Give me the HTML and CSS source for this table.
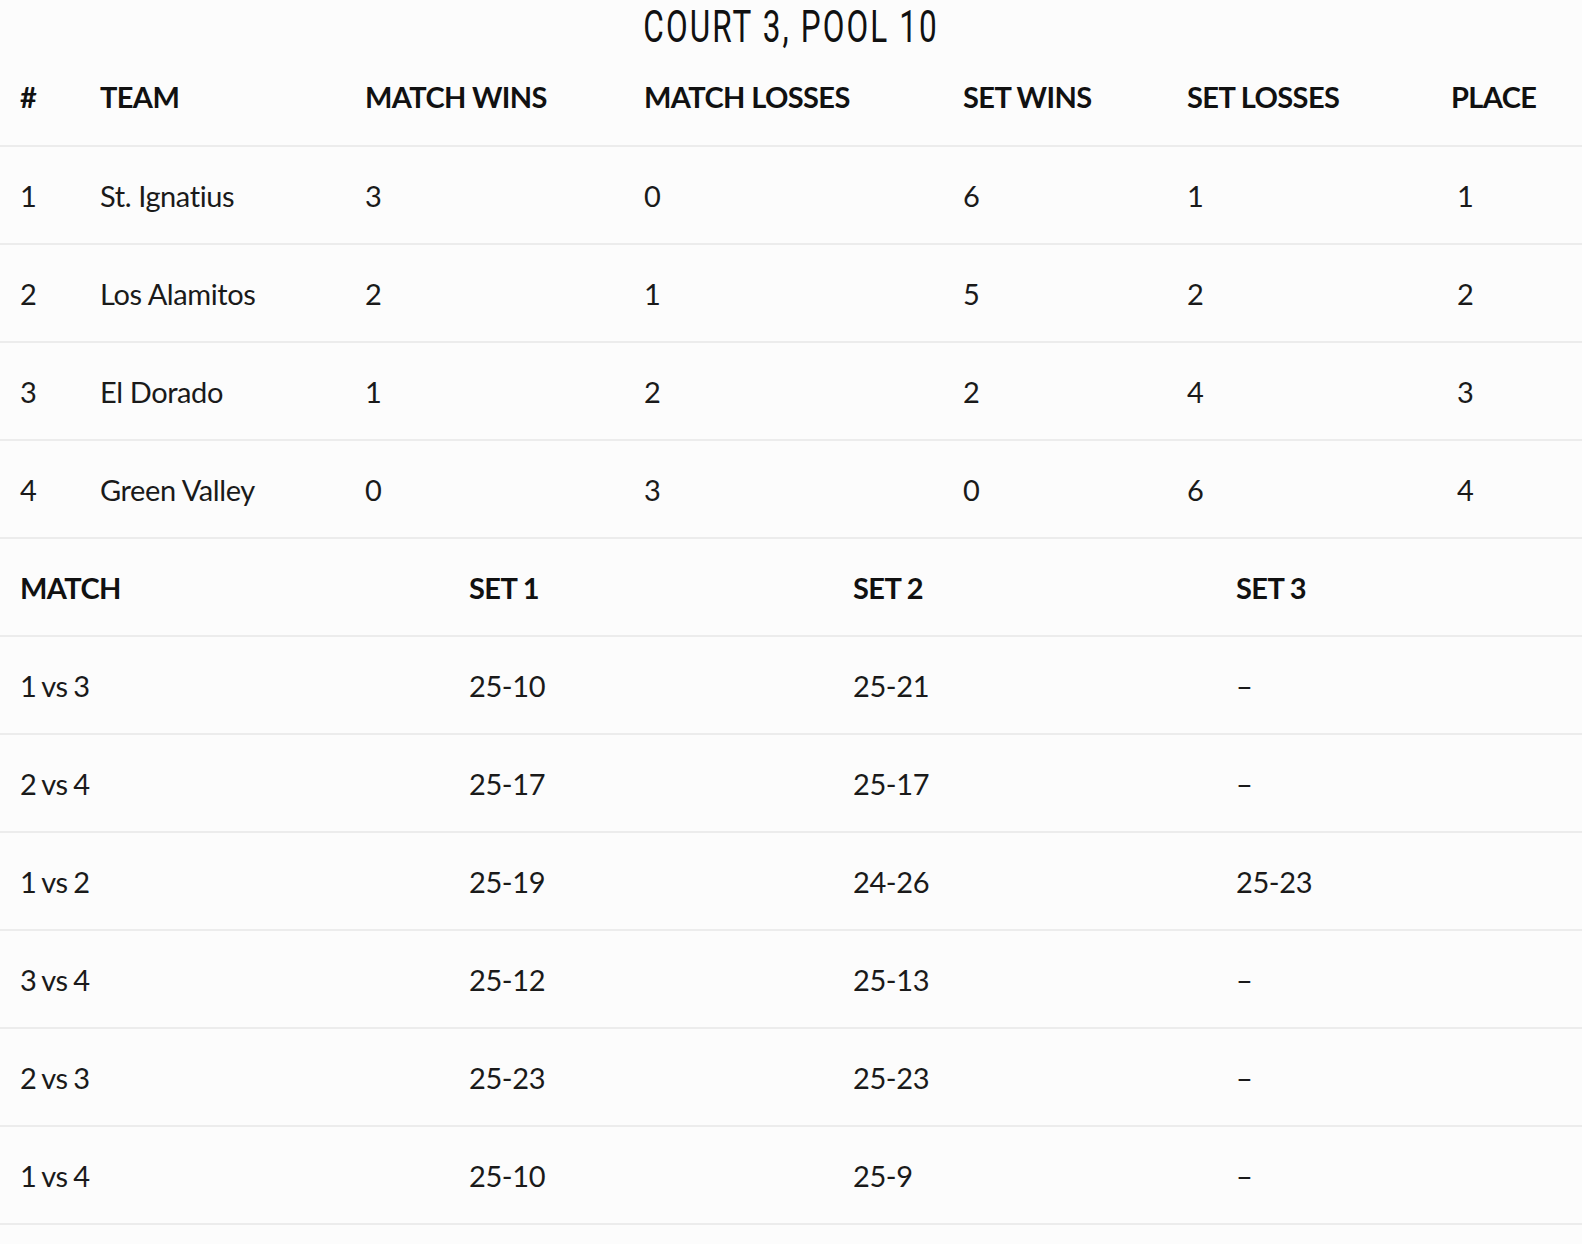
FILE: index.html
```html
<!DOCTYPE html>
<html lang="en">
<head>
<meta charset="utf-8">
<title>Court 3, Pool 10</title>
<link rel="stylesheet" href="styles.css">
</head>
<body>
<div class="title-wrap"><h1 class="title">COURT 3, POOL 10</h1></div>
<table class="grid standings">
  <colgroup>
    <col class="c-num"><col class="c-team"><col class="c-mw"><col class="c-ml"><col class="c-sw"><col class="c-sl"><col class="c-pl">
  </colgroup>
  <thead>
    <tr><th>#</th><th>TEAM</th><th>MATCH WINS</th><th>MATCH LOSSES</th><th>SET WINS</th><th>SET LOSSES</th><th>PLACE</th></tr>
  </thead>
  <tbody>
    <tr><td>1</td><td>St. Ignatius</td><td>3</td><td>0</td><td>6</td><td>1</td><td class="place">1</td></tr>
    <tr><td>2</td><td>Los Alamitos</td><td>2</td><td>1</td><td>5</td><td>2</td><td class="place">2</td></tr>
    <tr><td>3</td><td>El Dorado</td><td>1</td><td>2</td><td>2</td><td>4</td><td class="place">3</td></tr>
    <tr><td>4</td><td>Green Valley</td><td>0</td><td>3</td><td>0</td><td>6</td><td class="place">4</td></tr>
  </tbody>
</table>
<table class="grid matches">
  <colgroup>
    <col class="m-match"><col class="m-s1"><col class="m-s2"><col class="m-s3">
  </colgroup>
  <thead>
    <tr><th>MATCH</th><th>SET 1</th><th>SET 2</th><th>SET 3</th></tr>
  </thead>
  <tbody>
    <tr><td class="vs">1 vs 3</td><td>25-10</td><td>25-21</td><td>–</td></tr>
    <tr><td class="vs">2 vs 4</td><td>25-17</td><td>25-17</td><td>–</td></tr>
    <tr><td class="vs">1 vs 2</td><td>25-19</td><td>24-26</td><td>25-23</td></tr>
    <tr><td class="vs">3 vs 4</td><td>25-12</td><td>25-13</td><td>–</td></tr>
    <tr><td class="vs">2 vs 3</td><td>25-23</td><td>25-23</td><td>–</td></tr>
    <tr><td class="vs">1 vs 4</td><td>25-10</td><td>25-9</td><td>–</td></tr>
  </tbody>
</table>
</body>
</html>
```

FILE: styles.css
```css
html, body {
  margin: 0;
  padding: 0;
  background: #fcfcfc;
  color: #111;
  font-family: "Lato", "Noto Sans", sans-serif;
}

.title-wrap {
  height: 48px;
  display: flex;
  justify-content: center;
  align-items: flex-start;
}

.title {
  margin: 0;
  font-family: "Roboto", "DejaVu Sans", sans-serif;
  font-weight: 400;
  font-size: 45px;
  line-height: 54px;
  letter-spacing: 3px;
  color: #111;
  transform: scaleX(0.7);
  white-space: nowrap;
}

.grid {
  width: 100%;
  border-collapse: collapse;
  table-layout: fixed;
}

.grid th,
.grid td {
  text-align: left;
  vertical-align: middle;
  padding: 0 0 0 20px;
  height: 96px;
  white-space: nowrap;
}

.standings thead th {
  height: 97px;
}

.grid th {
  font-weight: 700;
  font-size: 29px;
  letter-spacing: -0.6px;
}

.grid td {
  font-weight: 400;
  font-size: 29px;
  letter-spacing: -0.4px;
  color: #1a1a1a;
  border-bottom: 2px solid #ececec;
}

.grid thead th {
  border-bottom: 2px solid #ececec;
}

.grid td.place {
  padding-left: 26px;
}

.grid td.vs {
  word-spacing: -1.5px;
}

.c-num { width: 80px; }
.c-team { width: 265px; }
.c-mw { width: 279px; }
.c-ml { width: 319px; }
.c-sw { width: 224px; }
.c-sl { width: 264px; }
.c-pl { width: 151px; }

.m-match { width: 449px; }
.m-s1 { width: 384px; }
.m-s2 { width: 383px; }
.m-s3 { width: 366px; }
```
